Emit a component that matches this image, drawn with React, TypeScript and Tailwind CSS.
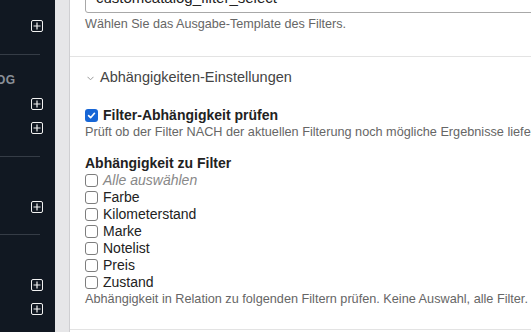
import React from 'react';

const PlusBox: React.FC = () => (
  <svg width="12" height="12" viewBox="0 0 12 12" className="block">
    <rect x="0.5" y="0.5" width="11" height="11" rx="1.5" fill="none" stroke="#f2f2f2" strokeWidth="1" />
    <path d="M6 2.5v7M2.5 6h7" stroke="#f2f2f2" strokeWidth="1.2" />
  </svg>
);

const Box: React.FC<{ checked?: boolean }> = ({ checked }) =>
  checked ? (
    <span className="w-[13px] h-[13px] rounded-[3px] bg-[#1766d6] flex items-center justify-center shrink-0">
      <svg width="9" height="9" viewBox="0 0 10 10">
        <path d="M1.8 5.2l2.2 2.3 4.3-5" fill="none" stroke="#fff" strokeWidth="1.8" strokeLinecap="round" strokeLinejoin="round" />
      </svg>
    </span>
  ) : (
    <span className="w-[13px] h-[13px] rounded-[3px] border border-[#7d7d7d] bg-white shrink-0" />
  );

const filters = ['Farbe', 'Kilometerstand', 'Marke', 'Notelist', 'Preis', 'Zustand'];

export default function App() {
  return (
    <div className="w-[531px] h-[332px] flex overflow-hidden bg-white font-['Liberation_Sans',Arial,sans-serif]">
      {/* sidebar */}
      <div className="w-[55px] shrink-0 bg-[#111822] flex flex-col">
        <div className="h-[54px] flex items-center justify-end pr-[12px] pb-[2px]">
          <PlusBox />
        </div>
        <div className="w-[40px] h-px bg-[#353c46]" />
        <div className="h-[101px] relative">
          <span className="absolute left-[-4px] top-[16px] text-[12px] font-bold text-[#8a9099] tracking-wide">OG</span>
          <div className="absolute right-[12px] top-[43px]"><PlusBox /></div>
          <div className="absolute right-[12px] top-[67px]"><PlusBox /></div>
        </div>
        <div className="w-[40px] h-px bg-[#353c46]" />
        <div className="h-[77px] flex items-center justify-end pr-[12px] pt-[22px]">
          <PlusBox />
        </div>
        <div className="w-[40px] h-px bg-[#353c46]" />
        <div className="flex-1 flex flex-col items-end pr-[12px] pt-[44px] gap-[12px]">
          <PlusBox />
          <PlusBox />
        </div>
      </div>

      {/* gray gutter */}
      <div className="w-[15px] shrink-0 bg-[#e6e6e8] border-r border-[#cfcfd2]" />

      {/* content */}
      <div className="flex-1 min-w-0 flex flex-col text-[#222]">
        <div className="pl-[15px] pb-[24px] border-b border-[#e3e3e3]">
          <div className="-mt-[20px] h-[33px] border border-[#a8a8a8] rounded-[3px] pl-[10px] text-[15px] leading-[33px] text-[#222] whitespace-nowrap w-[500px]">
            customcatalog_filter_select
          </div>
          <p className="mt-[3px] text-[12.6px] leading-[16px] text-[#666] whitespace-nowrap">Wählen Sie das Ausgabe-Template des Filters.</p>
        </div>

        <div className="pl-[15px] pt-[12px] pb-[22px] border-b border-[#e3e3e3]">
          <div className="flex items-center gap-[6px] h-[18px]">
            <svg width="7" height="5" viewBox="0 0 7 5" className="ml-[2px] mt-[1px]">
              <path d="M0.5 0.8l3 3 3-3" fill="none" stroke="#999" strokeWidth="1" />
            </svg>
            <span className="text-[14.5px] text-[#444] whitespace-nowrap">Abhängigkeiten-Einstellungen</span>
          </div>

          <label className="mt-[19px] flex items-center gap-[5px] h-[18px]">
            <Box checked />
            <span className="text-[14px] font-bold text-[#222] whitespace-nowrap">Filter-Abhängigkeit prüfen</span>
          </label>
          <p className="text-[12.7px] leading-[16px] text-[#666] whitespace-nowrap">
            Prüft ob der Filter NACH der aktuellen Filterung noch mögliche Ergebnisse liefert.
          </p>

          <div className="mt-[14px] text-[14px] font-bold leading-[18px] whitespace-nowrap">Abhängigkeit zu Filter</div>
          <div className="flex flex-col">
            <label className="flex items-center gap-[5px] h-[17px]">
              <Box />
              <span className="text-[14px] italic text-[#888]">Alle auswählen</span>
            </label>
            {filters.map((f) => (
              <label key={f} className="flex items-center gap-[5px] h-[17px]">
                <Box />
                <span className="text-[14px] text-[#222]">{f}</span>
              </label>
            ))}
          </div>
          <p className="text-[12.7px] leading-[16px] text-[#666] whitespace-nowrap">
            Abhängigkeit in Relation zu folgenden Filtern prüfen. Keine Auswahl, alle Filter.
          </p>
        </div>
      </div>
    </div>
  );
}
